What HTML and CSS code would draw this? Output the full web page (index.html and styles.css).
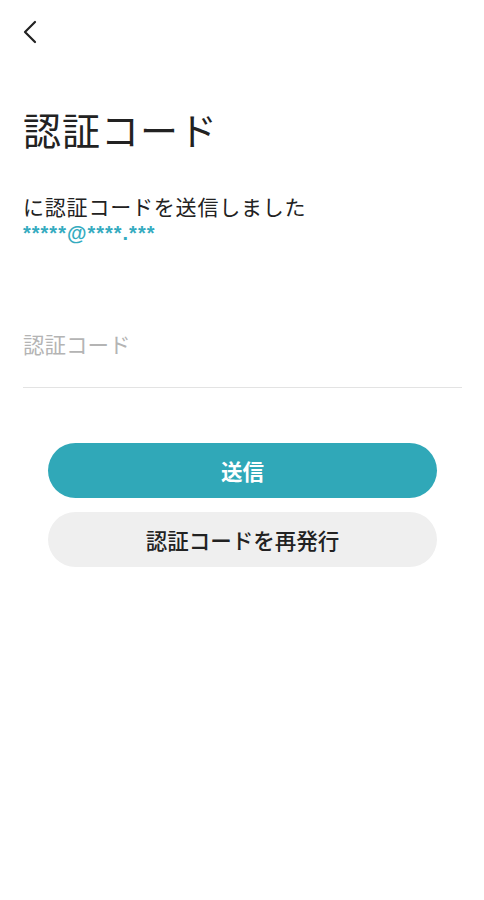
FILE: index.html
```html
<!DOCTYPE html>
<html lang="ja">
<head>
<meta charset="utf-8">
<link rel="stylesheet" href="styles.css">
</head>
<body>
<div class="page">
  <header class="topbar">
    <button class="back" aria-label="戻る">
      <svg width="16" height="24" viewBox="0 0 16 24"><path d="M13 2 L3 12 L13 22" fill="none" stroke="#222" stroke-width="2.2" stroke-linecap="round" stroke-linejoin="round"/></svg>
    </button>
  </header>
  <h1 class="title">認証コード</h1>
  <p class="lead">に認証コードを送信しました</p>
  <p class="email">*****@****.***</p>
  <div class="field">
    <input class="input" type="text" placeholder="認証コード">
  </div>
  <div class="actions">
    <button class="btn primary">送信</button>
    <button class="btn secondary">認証コードを再発行</button>
  </div>
</div>
</body>
</html>
```
FILE: styles.css
```css
* { box-sizing: border-box; }
html, body { margin: 0; padding: 0; background: #fff; }
body { font-family: "Noto Sans CJK JP", "Noto Sans", sans-serif; color: #222; }
.page { width: 484px; padding: 0 22px 0 23px; }
.topbar { height: 66px; padding-top: 20px; }
.back { border: 0; background: none; padding: 0; margin-left: -1px; width: 16px; height: 24px; display: block; }
.title { margin: 38px 0 0; font-size: 38px; font-weight: 400; line-height: 50px; letter-spacing: 1px; color: #222; }
.lead { margin: 37px 0 0; font-size: 21px; line-height: 30px; color: #222; letter-spacing: 0.8px; }
.email { margin: 0; font-family: "Liberation Sans", sans-serif; font-size: 20px; font-weight: 700; line-height: 24px; color: #35abbf; letter-spacing: 1px; }
.field { margin-top: 84px; border-bottom: 1px solid #e3e3e3; height: 59px; }
.input { width: 100%; border: 0; outline: none; padding: 0; font-family: "Noto Sans CJK JP", sans-serif; font-size: 21.5px; line-height: 30px; height: 30px; color: #222; background: transparent; }
.input::placeholder { color: #b4b4b4; }
.actions { display: flex; flex-direction: column; gap: 14px; padding: 55px 25px 0 25px; }
.btn { height: 55px; border-radius: 28px; border: 0; font-family: "Noto Sans CJK JP", sans-serif; font-size: 21.5px; font-weight: 500; }
.primary { background: #30a8b8; color: #fff; font-weight: 700; }
.secondary { background: #efefef; color: #222; }
```
